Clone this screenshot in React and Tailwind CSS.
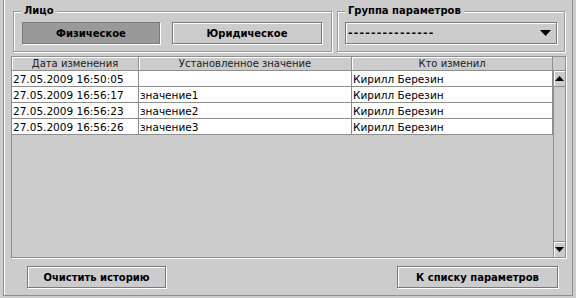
import React from "react";

const rows = [
  { date: "27.05.2009 16:50:05", value: "", who: "Кирилл Березин" },
  { date: "27.05.2009 16:56:17", value: "значение1", who: "Кирилл Березин" },
  { date: "27.05.2009 16:56:23", value: "значение2", who: "Кирилл Березин" },
  { date: "27.05.2009 16:56:26", value: "значение3", who: "Кирилл Березин" },
];

function Button({ children, pressed, className = "" }) {
  return (
    <div
      className={`h-[22px] flex items-center justify-center border border-[#7a7a7a] text-[10px] font-bold text-black ${
        pressed
          ? "bg-[#999999] shadow-[1px_1px_0_white]"
          : "bg-[#cccccc] shadow-[inset_1px_1px_0_white,1px_1px_0_white]"
      } ${className}`}
    >
      {children}
    </div>
  );
}

function Group({ title, className = "", children }) {
  return (
    <div
      className={`relative border border-[#999999] shadow-[inset_1px_1px_0_white,1px_1px_0_white] ${className}`}
    >
      {/* legend over the border */}
      <span className="absolute left-[7px] top-[-8px] px-[3px] bg-[#cccccc] text-[10px] font-bold leading-[14px]">
        {title}
      </span>
      {children}
    </div>
  );
}

function Arrow({ up }) {
  return (
    <svg width="9" height="5" viewBox="0 0 9 5">
      <path d={up ? "M0 5 L4.5 0 L9 5 Z" : "M0 0 L9 0 L4.5 5 Z"} fill="black" />
    </svg>
  );
}

export default function App() {
  return (
    <div
      className="w-[576px] h-[298px] bg-[#cccccc] px-[3px] pb-[2px] text-black"
      style={{ fontFamily: '"DejaVu Sans", sans-serif' }}
    >
      <div className="h-full border-l border-r border-b border-[#8e8e8e] shadow-[inset_1px_0_0_white]">
        {/* Top groups */}
        <div className="flex gap-[5px] pl-[9px] pt-[11px]">
          <Group title="Лицо" className="w-[319px] h-[41px]">
            <div className="flex gap-[12px] pl-[8px] pt-[10px]">
              <Button pressed className="w-[138px]">
                Физическое
              </Button>
              <Button className="w-[150px]">Юридическое</Button>
            </div>
          </Group>
          <Group title="Группа параметров" className="w-[228px] h-[41px]">
            <div className="pl-[7px] pt-[10px]">
              <div className="w-[212px] h-[22px] flex items-center justify-between pl-[2px] pr-[5px] border border-[#7a7a7a] shadow-[inset_1px_1px_0_white,1px_1px_0_white] text-[11px] font-bold">
                <span className="tracking-[1.2px]">---------------</span>
                <svg width="11" height="6" viewBox="0 0 11 6">
                  <path d="M0 0 L11 0 L5.5 6 Z" fill="black" />
                </svg>
              </div>
            </div>
          </Group>
        </div>

        {/* Table */}
        <div className="ml-[7px] mt-[4px] w-[555px] h-[202px] border border-[#8e8e8e] shadow-[1px_1px_0_white] flex text-[10.5px]">
          <div className="w-[541px] flex flex-col">
            <div className="flex h-[14px] leading-[13px] text-[10px] text-[#222]">
              <div className="w-[127px] text-center border-r border-b border-[#8e8e8e] shadow-[inset_1px_1px_0_white]">
                Дата изменения
              </div>
              <div className="w-[213px] text-center border-r border-b border-[#8e8e8e] shadow-[inset_1px_1px_0_white]">
                Установленное значение
              </div>
              <div className="w-[201px] text-center border-r border-b border-[#8e8e8e] shadow-[inset_1px_1px_0_white]">
                Кто изменил
              </div>
            </div>
            {rows.map((r) => (
              <div key={r.date} className="flex h-[16px] leading-[16px] bg-white">
                <div className="w-[127px] pl-[1px] border-r border-b border-[#8e8e8e] whitespace-nowrap">
                  {r.date}
                </div>
                <div className="w-[213px] pl-[1px] border-r border-b border-[#8e8e8e] whitespace-nowrap">
                  {r.value}
                </div>
                <div className="w-[201px] pl-[1px] border-r border-b border-[#8e8e8e] whitespace-nowrap">
                  {r.who}
                </div>
              </div>
            ))}
          </div>
          {/* Scrollbar */}
          <div className="w-[13px] flex flex-col">
            <div className="h-[14px] border-b border-[#8e8e8e]" />
            <div className="flex-1 flex flex-col border-l border-[#8e8e8e]">
              <div className="h-[16px] flex items-center justify-center border-b border-[#8e8e8e] shadow-[inset_1px_1px_0_white]">
                <Arrow up />
              </div>
              <div className="flex-1" />
              <div className="h-[16px] flex items-center justify-center border-t border-[#8e8e8e] shadow-[inset_1px_1px_0_white]">
                <Arrow />
              </div>
            </div>
          </div>
        </div>

        {/* Bottom buttons */}
        <div className="flex justify-between pl-[23px] pr-[14px] mt-[8px]">
          <Button className="w-[139px]">Очистить историю</Button>
          <Button className="w-[161px]">К списку параметров</Button>
        </div>
      </div>
    </div>
  );
}
